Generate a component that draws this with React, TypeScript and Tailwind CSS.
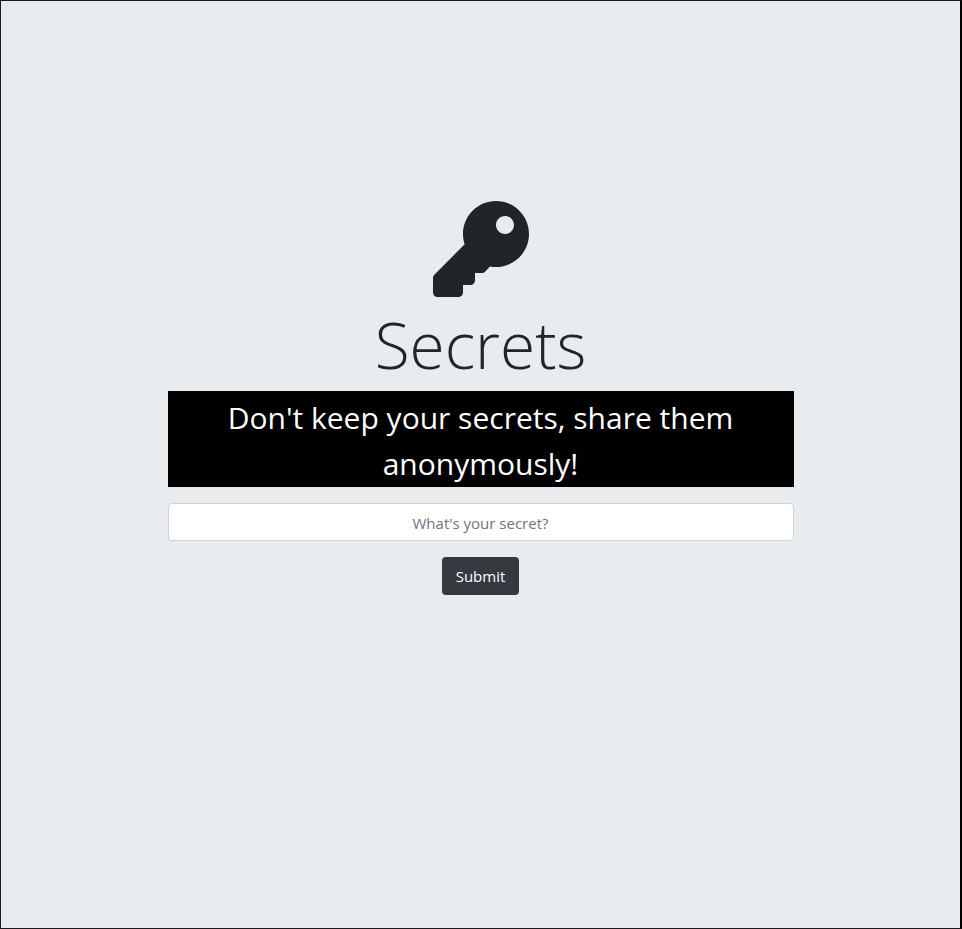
import { FaKey } from "react-icons/fa";

export default function App() {
  return (
    <div className="min-h-screen border border-r-2 border-[#1b1a1e] border-r-black bg-[#e8ecef] font-['Open_Sans','Noto_Sans',sans-serif] text-[#212529]">
      <main className="mx-auto flex max-w-[690px] flex-col items-center px-8 pt-[200px] pb-16 text-center">
        <FaKey className="size-24" aria-hidden="true" />
        <h1 className="mt-2 mb-1.5 text-[64px] leading-[80px] font-light">Secrets</h1>
        <p className="w-full bg-black pt-1 text-[30px] leading-[46px] text-white">
          Don't keep your secrets, share them anonymously!
        </p>
        <form className="mt-4 flex w-full flex-col items-center gap-4" onSubmit={(e) => e.preventDefault()}>
          <input
            type="text"
            name="secret"
            aria-label="What's your secret?"
            placeholder="What's your secret?"
            className="h-[38px] w-full rounded border border-[#ced4da] bg-white px-3 pt-0.5 text-center text-[15px] placeholder:text-[#6c757d]"
          />
          <button type="submit" className="h-[38px] rounded bg-[#343a40] px-3.5 text-[15px] text-white">
            Submit
          </button>
        </form>
      </main>
    </div>
  );
}
